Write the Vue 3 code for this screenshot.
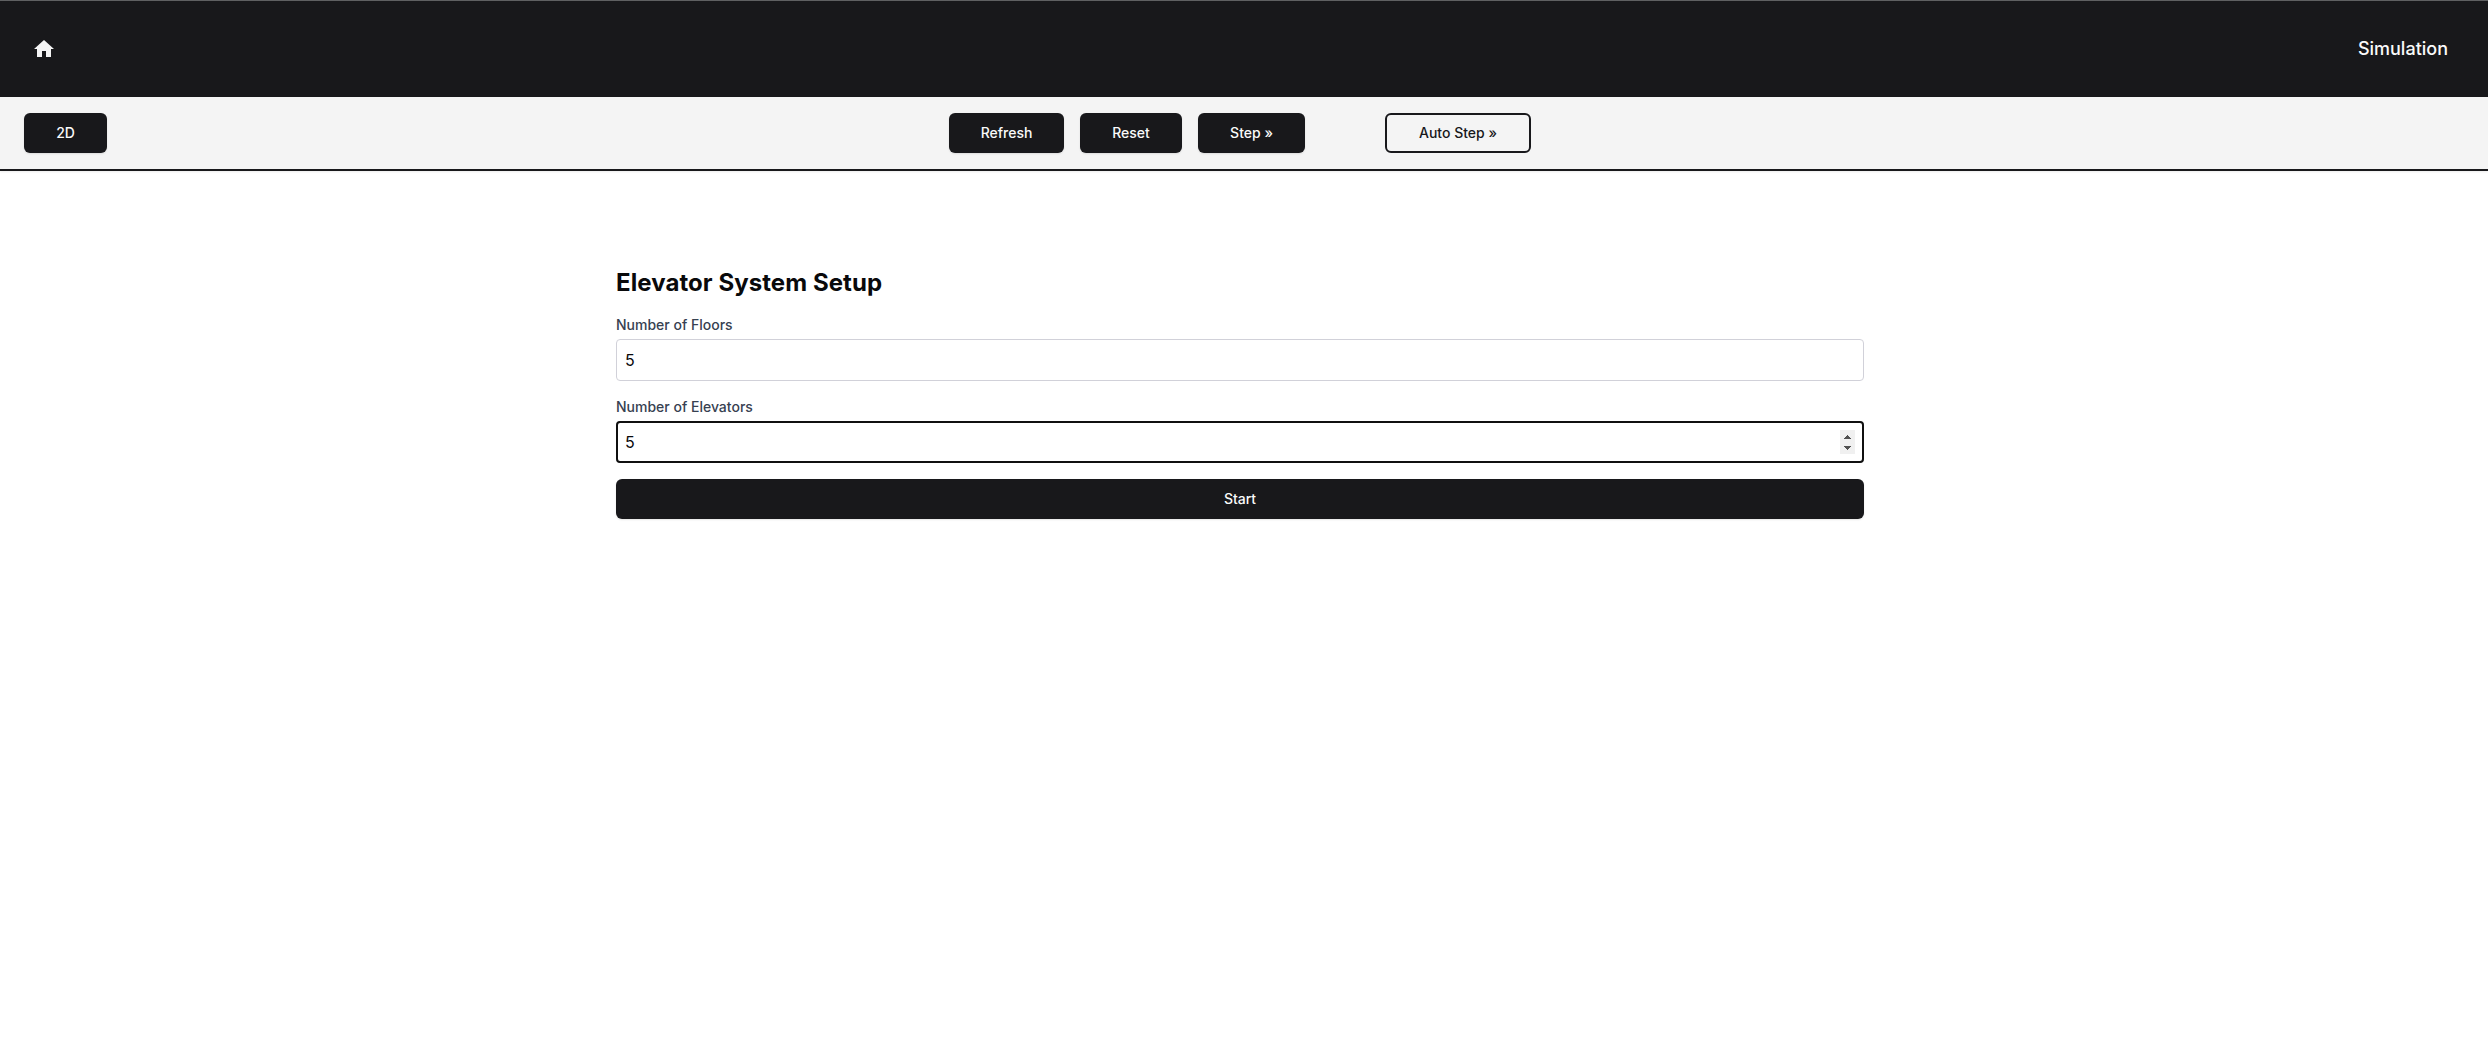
<script setup>
import { ref } from 'vue'

const floors = ref(5)
const elevators = ref(5)
</script>

<template>
  <div class="page">
    <header class="header">
      <a class="home" aria-label="Home">
        <svg width="24" height="24" viewBox="0 0 24 24" fill="currentColor">
          <path d="M10 20v-6h4v6h5v-8h3L12 3 2 12h3v8z" />
        </svg>
      </a>
      <span class="title">Simulation</span>
    </header>

    <nav class="toolbar">
      <div class="side"><button class="btn toggle">2D</button></div>
      <div class="actions">
        <button class="btn refresh">Refresh</button>
        <button class="btn reset">Reset</button>
        <button class="btn step">Step »</button>
        <button class="btn outline">Auto Step »</button>
      </div>
      <div class="side"></div>
    </nav>

    <main class="setup">
      <h2>Elevator System Setup</h2>
      <form @submit.prevent>
        <div class="field">
          <label for="floors">Number of Floors</label>
          <input id="floors" v-model="floors" type="number" />
        </div>
        <div class="field">
          <label for="elevators">Number of Elevators</label>
          <div class="control">
            <input id="elevators" v-model="elevators" class="active" type="number" />
            <svg class="spinner" width="15" height="24" viewBox="0 0 15 24" shape-rendering="crispEdges">
              <rect width="15" height="24" fill="#f0f0f0" />
              <path d="M7 5h1v1h1v1h1v1h1v1H4V8h1V7h1V6h1z" fill="#505050" />
              <path d="M4 16h7v1h-1v1H9v1H8v1H7v-1H6v-1H5v-1H4z" fill="#505050" />
            </svg>
          </div>
        </div>
        <button class="btn wide">Start</button>
      </form>
    </main>
  </div>
</template>

<style>
body {
  margin: 0;
  background: #fff;
}
</style>

<style scoped>
.page,
.page * {
  box-sizing: border-box;
}
.page {
  min-height: 100vh;
  font-family: Inter, sans-serif;
  color: #09090b;
}
.header {
  height: 97px;
  padding: 0 40px 0 32px;
  display: flex;
  align-items: center;
  justify-content: space-between;
  background: #18181b;
  border-top: 1px solid #5f6062;
  color: #f4f4f5;
}
.home {
  display: flex;
}
.title {
  font-size: 18px;
  line-height: 28px;
  font-weight: 500;
  color: #fafafa;
}
.toolbar {
  height: 74px;
  padding: 0 32px 0 24px;
  display: flex;
  align-items: center;
  background: #f4f4f4;
  border-bottom: 2px solid #18181b;
  box-shadow: 0 1px 2px rgba(0, 0, 0, 0.08);
}
.side {
  flex: 1;
  display: flex;
}
.actions {
  display: flex;
  gap: 16px;
}
.btn {
  height: 40px;
  padding: 0;
  border: 0;
  border-radius: 6px;
  background: #18181b;
  color: #fafafa;
  font-family: inherit;
  font-size: 14px;
  line-height: 20px;
  font-weight: 500;
  white-space: nowrap;
  box-shadow: 0 1px 2px rgba(0, 0, 0, 0.1);
}
.toggle {
  width: 83px;
}
.refresh {
  width: 115px;
}
.reset {
  width: 102px;
}
.step {
  width: 107px;
}
.outline {
  width: 146px;
  margin-left: 64px;
  border: 2px solid #18181b;
  background: transparent;
  color: #18181b;
  box-shadow: none;
}
.setup {
  width: 1248px;
  margin: 0 0 0 calc(50% - 628px);
  padding-top: 96px;
}
h2 {
  margin: 0 0 16px;
  font-size: 24px;
  line-height: 32px;
  font-weight: 700;
  letter-spacing: 0.07px;
}
.field {
  margin-bottom: 16px;
}
label {
  display: block;
  margin-bottom: 4px;
  font-size: 14px;
  line-height: 20px;
  font-weight: 500;
  color: #374151;
}
.control {
  position: relative;
}
input {
  display: block;
  width: 100%;
  height: 42px;
  margin: 0;
  padding: 8px;
  border: 1px solid #d1d1d9;
  border-radius: 4px;
  background: #fff;
  color: #09090b;
  font-family: inherit;
  font-size: 16px;
  line-height: 24px;
  appearance: textfield;
}
.active {
  outline: 2px solid #101010;
  outline-offset: -2px;
}
.spinner {
  position: absolute;
  top: 9px;
  right: 9px;
}
.wide {
  display: block;
  width: 100%;
}
</style>
